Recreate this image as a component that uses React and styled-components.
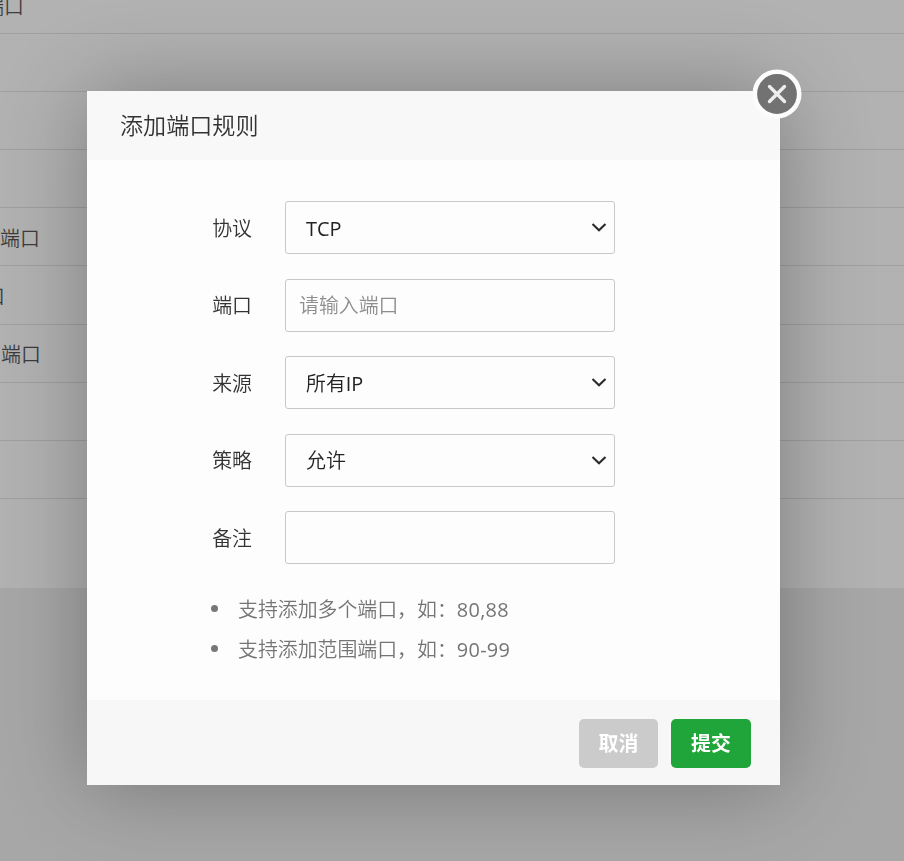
import React, { useState } from 'react';

import styled, { createGlobalStyle } from 'styled-components';

const GlobalStyle = createGlobalStyle`
    * {
        box-sizing: border-box;
    }
    body {
        margin: 0;
        background: #a7a7a7;
        overflow: hidden;
    }
    body, input, select, button {
        font-family: "Open Sans", "Noto Sans CJK SC", sans-serif;
        font-size: 19.9px;
    }
`;

const Page = styled.div`
    height: 861px;
    overflow: hidden;
`;

const RuleList = styled.div`
    height: 612px;
    margin-top: -24px;
    background: #b2b2b2;
    display: flex;
    flex-direction: column;
`;

const RuleRow = styled.div`
    height: 58.1px;
    flex-shrink: 0;
    padding-top: 4px;
    border-bottom: 1px solid #9f9f9f;
    color: #3c3c3c;
    display: flex;
    align-items: center;
    line-height: 28px;
`;

const RuleText = styled.span`
    margin-left: ${(props) => props.$shift}px;
    font-weight: 350;
    white-space: nowrap;
`;

const Overlay = styled.div`
    position: fixed;
    inset: 0;
    padding: 91px 0 0 87px;
`;

const Dialog = styled.form`
    position: relative;
    width: 693px;
    height: 694px;
    background: #fdfdfd;
    box-shadow: 1px 1px 82px rgba(0, 0, 0, 0.3);
    display: flex;
    flex-direction: column;
`;

const DialogHeader = styled.div`
    height: 69px;
    padding-left: 33px;
    background: #f8f8f8;
    color: #333;
    font-size: 23.1px;
    font-weight: 350;
    line-height: 69px;
`;

const CloseButton = styled.button`
    position: absolute;
    top: -22px;
    right: -22px;
    width: 50px;
    height: 50px;
    padding: 0;
    border: none;
    background: none;
    cursor: pointer;

    svg {
        display: block;
    }
`;

const DialogBody = styled.div`
    flex: 1;
    padding: 41.2px 0 0 87px;
    display: flex;
    flex-direction: column;
    gap: 24.6px;
`;

const Line = styled.label`
    height: 52.9px;
    display: flex;
    align-items: center;
`;

const LineName = styled.span`
    width: 78px;
    margin: -1px 33px 0 0;
    color: #333;
    font-weight: 350;
    text-align: right;
`;

const Field = styled.div`
    position: relative;
    width: 330px;
    height: 100%;
`;

const TextInput = styled.input`
    width: 100%;
    height: 100%;
    padding: 0 13px;
    border: 1px solid #c8c8c8;
    border-radius: 3px;
    background: transparent;
    color: #222;
    font-weight: 350;
    outline: none;

    &::placeholder {
        color: #8e8e8e;
    }
`;

const SelectInput = styled.select`
    width: 100%;
    height: 100%;
    padding: 1px 19px 0 20px;
    border: 1px solid #c8c8c8;
    border-radius: 3px;
    background: transparent;
    color: #222;
    font-family: "Open Sans", "Noto Sans CJK SC DemiLight", "Noto Sans CJK SC", sans-serif;
    appearance: none;
    outline: none;
`;

const Arrow = styled.svg`
    position: absolute;
    top: 21px;
    right: 8px;
    pointer-events: none;
`;

const Tips = styled.ul`
    margin: -0.5px 0 0;
    padding: 0;
    list-style: none;
    color: #757575;
`;

const Tip = styled.li`
    height: 40px;
    padding-left: 37px;
    display: flex;
    align-items: center;
    font-weight: 350;

    &::before {
        content: '';
        width: 7px;
        height: 7px;
        margin: 1px 20px 0 0;
        border-radius: 50%;
        background: #777;
    }
`;

const PortExample = styled.span`
    font-weight: 400;
    letter-spacing: 0.3px;
`;

const DialogFooter = styled.div`
    height: 85px;
    padding: 19px 29px 0 0;
    background: #f7f7f7;
    display: flex;
    justify-content: flex-end;
    gap: 13px;
`;

const Button = styled.button`
    width: ${(props) => (props.$primary ? 80 : 79)}px;
    height: 49px;
    padding: 0 0 2px;
    border: none;
    border-radius: 5px;
    background: ${(props) => (props.$primary ? '#20a53a' : '#cbcbcb')};
    color: white;
    font-weight: 700;
    cursor: pointer;
`;

const rules = [
    { text: '端口', shift: -16 },
    {},
    {},
    {},
    { text: '端口', shift: 0 },
    { text: '端口', shift: -35 },
    { text: '端口', shift: 1 },
    {},
    {},
];

function SelectField({ value, onChange, options }) {
    return (
        <Field>
            <SelectInput value={value} onChange={(e) => onChange(e.target.value)}>
                {options.map((option) => (
                    <option key={option}>{option}</option>
                ))}
            </SelectInput>
            <Arrow width="16" height="11" viewBox="0 0 16 11">
                <path d="M1.5 2 L8 8.3 L14.5 2" fill="none" stroke="#2b2b2b" strokeWidth="2.1" />
            </Arrow>
        </Field>
    );
}

function App() {
    const [protocol, setProtocol] = useState('TCP');
    const [source, setSource] = useState('所有IP');
    const [policy, setPolicy] = useState('允许');
    const [port, setPort] = useState('');
    const [remark, setRemark] = useState('');

    return (
        <Page>
            <GlobalStyle />
            <RuleList>
                {rules.map((rule, index) => (
                    <RuleRow key={index}>
                        {rule.text && <RuleText $shift={rule.shift}>{rule.text}</RuleText>}
                    </RuleRow>
                ))}
            </RuleList>

            <Overlay>
                <Dialog onSubmit={(e) => e.preventDefault()}>
                    <DialogHeader>添加端口规则</DialogHeader>
                    <CloseButton type="button">
                        <svg width="50" height="50" viewBox="0 0 50 50">
                            <circle cx="25" cy="25" r="22.2" fill="#727272" stroke="#fcfcfc" strokeWidth="4.6" />
                            <path
                                d="M17.5 17.5 L32.5 32.5 M32.5 17.5 L17.5 32.5"
                                stroke="#ededed"
                                strokeWidth="3.4"
                                strokeLinecap="round"
                            />
                        </svg>
                    </CloseButton>

                    <DialogBody>
                        <Line>
                            <LineName>协议</LineName>
                            <SelectField value={protocol} onChange={setProtocol} options={['TCP', 'UDP']} />
                        </Line>
                        <Line>
                            <LineName>端口</LineName>
                            <Field>
                                <TextInput placeholder="请输入端口" value={port} onChange={(e) => setPort(e.target.value)} />
                            </Field>
                        </Line>
                        <Line>
                            <LineName>来源</LineName>
                            <SelectField value={source} onChange={setSource} options={['所有IP', '指定IP']} />
                        </Line>
                        <Line>
                            <LineName>策略</LineName>
                            <SelectField value={policy} onChange={setPolicy} options={['允许', '拒绝']} />
                        </Line>
                        <Line>
                            <LineName>备注</LineName>
                            <Field>
                                <TextInput value={remark} onChange={(e) => setRemark(e.target.value)} />
                            </Field>
                        </Line>
                        <Tips>
                            <Tip>
                                <span>支持添加多个端口，如：<PortExample>80,88</PortExample></span>
                            </Tip>
                            <Tip>
                                <span>支持添加范围端口，如：<PortExample>90-99</PortExample></span>
                            </Tip>
                        </Tips>
                    </DialogBody>

                    <DialogFooter>
                        <Button type="button">取消</Button>
                        <Button type="submit" $primary>提交</Button>
                    </DialogFooter>
                </Dialog>
            </Overlay>
        </Page>
    );
}

export default App;
